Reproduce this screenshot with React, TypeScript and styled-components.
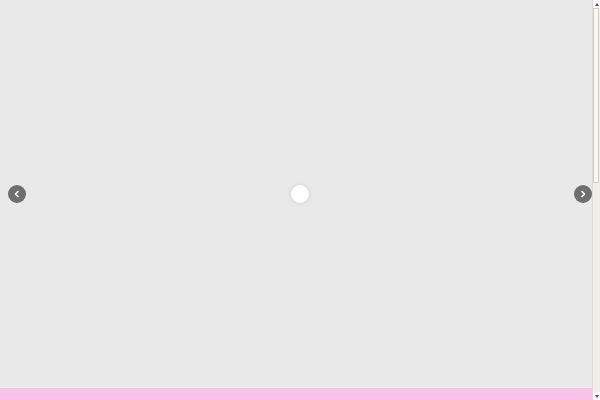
import React from 'react';
import styled, { createGlobalStyle } from 'styled-components';

const GlobalStyle = createGlobalStyle`
  html, body {
    margin: 0;
    padding: 0;
    background: #e9e9e9;
    font-family: "Liberation Sans", Arial, sans-serif;
    overflow: hidden;
  }
`;

const Frame = styled.div`
  display: flex;
  height: 400px;
  width: 600px;
`;

const Main = styled.main`
  flex: 1;
  display: flex;
  flex-direction: column;
  overflow: hidden;
`;

const Carousel = styled.section`
  position: relative;
  flex: 0 0 388px;
  background: #e9e9e9;
  display: flex;
  align-items: center;
  justify-content: space-between;
  padding: 0 0 0 8px;
`;

const NavButton = styled.button`
  width: 18px;
  height: 18px;
  border-radius: 50%;
  border: none;
  padding: 0;
  background: #6f6f6f;
  display: flex;
  align-items: center;
  justify-content: center;
  cursor: pointer;

  svg {
    width: 8px;
    height: 8px;
  }
`;

const Loader = styled.div`
  position: absolute;
  top: 185px;
  left: calc(50% - 5px);
  width: 18px;
  height: 18px;
  border-radius: 50%;
  background: #ffffff;
  box-shadow: 0 0 4px rgba(0, 0, 0, 0.12);
`;

const Footer = styled.section`
  flex: 1;
  background: #fcc1e9;
`;

const ScrollRail = styled.div`
  flex: 0 0 8px;
  display: flex;
  flex-direction: column;
  background: #f1eee9;
  border-left: 1px solid #dedbd6;
  box-sizing: border-box;
`;

const ScrollArrow = styled.div<{ $up?: boolean }>`
  flex: 0 0 8px;
  display: flex;
  align-items: center;
  justify-content: center;
  background: #f8f7f5;

  &::after {
    content: '';
    width: 0;
    height: 0;
    border-left: 2px solid transparent;
    border-right: 2px solid transparent;
    ${({ $up }) =>
      $up ? 'border-bottom: 3px solid #555;' : 'border-top: 3px solid #555;'}
  }
`;

const ScrollThumb = styled.div`
  flex: 0 0 175px;
  margin: 0 1px 0 0;
  background: #f8f7f4;
  border: 1px solid #d2cec8;
  box-sizing: border-box;
`;

const ScrollTrack = styled.div`
  flex: 1;
`;

const Chevron: React.FC<{ dir: 'left' | 'right' }> = ({ dir }) => (
  <svg viewBox="0 0 8 8">
    <path
      d={dir === 'left' ? 'M5 1.5 L2.5 4 L5 6.5' : 'M3 1.5 L5.5 4 L3 6.5'}
      fill="none"
      stroke="#ffffff"
      strokeWidth="1.6"
      strokeLinecap="round"
      strokeLinejoin="round"
    />
  </svg>
);

const App: React.FC = () => (
  <>
    <GlobalStyle />
    <Frame>
      <Main>
        <Carousel>
          <NavButton aria-label="Previous">
            <Chevron dir="left" />
          </NavButton>
          <Loader />
          <NavButton aria-label="Next">
            <Chevron dir="right" />
          </NavButton>
        </Carousel>
        <Footer />
      </Main>
      <ScrollRail>
        <ScrollArrow $up />
        <ScrollThumb />
        <ScrollTrack />
        <ScrollArrow />
      </ScrollRail>
    </Frame>
  </>
);

export default App;
